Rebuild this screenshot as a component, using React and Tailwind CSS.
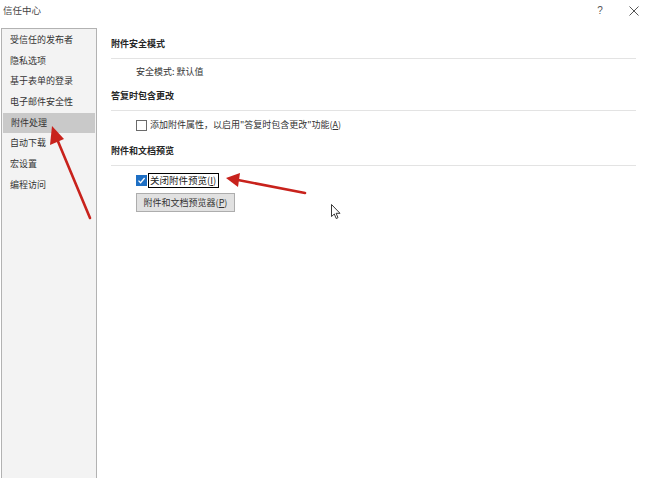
import React from 'react';

const navItems = ['受信任的发布者', '隐私选项', '基于表单的登录', '电子邮件安全性', '附件处理', '自动下载', '宏设置', '编程访问'];

const Checkbox = ({ checked }) => (
    <span
        className={
            'inline-flex items-center justify-center w-[11px] h-[11px] border ' +
            (checked ? 'bg-[#1e6fc4] border-[#1e6fc4]' : 'bg-white border-[#6b6b6b]')
        }
    >
        {checked && (
            <svg width="9" height="9" viewBox="0 0 9 9">
                <path d="M1.5 4.6 L3.6 6.7 L7.6 2" fill="none" stroke="white" strokeWidth="1.3" />
            </svg>
        )}
    </span>
);

const Section = ({ title, children }) => (
    <div>
        <div className="h-4 leading-4 font-bold text-[#262626]">{title}</div>
        <div className="mt-[6px] border-t border-[#e3e3e3]"></div>
        {children}
    </div>
);

const App = () => {
    return (
        <div
            className="relative w-[650px] h-[478px] bg-white text-[9px] text-[#333] overflow-hidden flex flex-col"
            style={{ fontFamily: '"Noto Sans CJK SC", "Noto Sans", sans-serif' }}
        >
            {/* title bar */}
            <div className="h-[28px] flex items-start">
                <div className="pl-[3px] pt-[2px] text-[9.5px] leading-4 text-[#444]">信任中心</div>
                <div className="ml-auto flex items-start pt-[3px]">
                    <span className="w-[14px] text-center text-[10px] leading-4 text-[#555]" style={{ fontFamily: '"Liberation Sans", sans-serif' }}>?</span>
                    <span className="ml-[22px] mr-[11px] mt-[3px]">
                        <svg width="10" height="10" viewBox="0 0 10 10">
                            <path d="M0.5 0.5 L9.5 9.5 M9.5 0.5 L0.5 9.5" stroke="#555" strokeWidth="1" />
                        </svg>
                    </span>
                </div>
            </div>

            <div className="flex flex-1 min-h-0">
                {/* sidebar */}
                <div className="ml-px w-[96px] bg-[#f3f3f3] border border-b-0 border-[#b2b2b2] pt-px">
                    {navItems.map((item) => (
                        <div
                            key={item}
                            className={
                                'h-[20.7px] leading-[20.7px] pl-[8px] text-[#333] ' +
                                (item === '附件处理' ? 'bg-[#c9c9c9] mx-px pl-[7px]' : '')
                            }
                        >
                            {item}
                        </div>
                    ))}
                </div>

                {/* content */}
                <div className="flex-1 pl-[14px] pr-[14px] pt-[8px]">
                    <Section title="附件安全模式">
                        <div className="mt-[5px] h-4 leading-4 pl-[25px]">安全模式: 默认值</div>
                    </Section>
                    <div className="mt-[8px]">
                        <Section title="答复时包含更改">
                            <div className="mt-[6px] h-4 flex items-center pl-[25px]">
                                <Checkbox checked={false} />
                                <span className="ml-[3px]">
                                    添加附件属性，以启用"答复时包含更改"功能(<span className="underline">A</span>)
                                </span>
                            </div>
                        </Section>
                    </div>
                    <div className="mt-[10px]">
                        <Section title="附件和文档预览">
                            <div className="mt-[6px] h-4 flex items-center pl-[25px]">
                                <Checkbox checked={true} />
                                <span className="ml-px border-[1.5px] border-black pl-px pr-[2px] text-[9.5px] leading-[13px] text-[#222]">
                                    关闭附件预览(<span className="underline">I</span>)
                                </span>
                            </div>
                            <div className="mt-[5px] pl-[25px]">
                                <button className="w-[99px] h-[19px] bg-[#e1e1e1] border border-[#adadad] text-[9px] text-[#333] leading-[17px]">
                                    附件和文档预览器(<span className="underline">P</span>)
                                </button>
                            </div>
                        </Section>
                    </div>
                </div>
            </div>

            {/* annotation arrows */}
            <svg className="absolute left-0 top-0 pointer-events-none" width="650" height="478">
                <g fill="#c8221c" stroke="#c8221c" strokeLinecap="round">
                    <line x1="90" y1="218" x2="57" y2="139" strokeWidth="2.6" />
                    <polygon points="52,126 50,145 64,139" stroke="none" />
                    <line x1="305" y1="193" x2="238" y2="180" strokeWidth="2.6" />
                    <polygon points="226,178 240,173 238,187" stroke="none" />
                </g>
            </svg>

            {/* mouse cursor */}
            <svg className="absolute left-[331px] top-[204px] pointer-events-none" width="11" height="16" viewBox="0 0 11 16">
                <path d="M0.5 0.5 L0.5 12.5 L3.3 10 L5.2 14.5 L7 13.7 L5.1 9.3 L9 9.3 Z" fill="white" stroke="#222" strokeWidth="0.9" />
            </svg>
        </div>
    );
};

export default App;
